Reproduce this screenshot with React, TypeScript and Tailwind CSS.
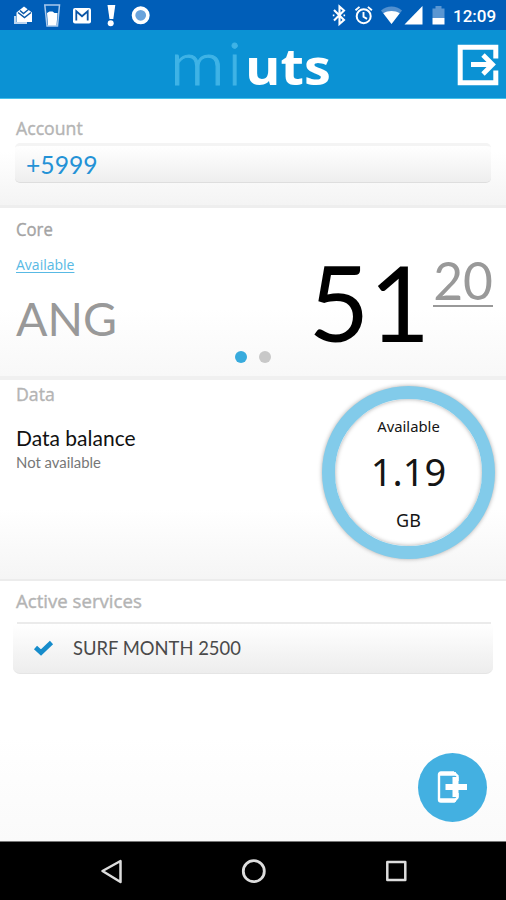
import type { ReactNode } from 'react'
import clsx from 'clsx'

function StatusBar() {
  return (
    <div className="h-[30px] bg-[#005eb8] flex items-center text-white">
      <svg className="w-[170px] h-[30px]" viewBox="0 0 170 30" fill="none">
        {/* inbox */}
        <path d="M14 16v8h13v-2H16v-6z" fill="#bcd5ef" />
        <path d="M16.500 12.500 24 6.500l8 6V22h-15.500z" fill="#fff" />
        <path d="m18 12.500 6.500 5 6.500-5M20 10.500l3.500 3L29 9" stroke="#0a58a8" strokeWidth="1.500" />
        {/* glass */}
        <path d="M44.800 5h14.700l-2 21H47z" stroke="#a9c9ec" strokeWidth="1.500" />
        <path d="M47 13l2.500-1.500h3l2 1.500h3L56.500 25.500h-8.500z" fill="#fff" />
        {/* mail */}
        <rect x="73" y="8" width="18" height="15.500" rx="2" fill="#fff" />
        <path d="M76.300 20.500V11.300l5.700 5 5.700-5v9.200" stroke="#0b55a6" strokeWidth="1.800" />
        {/* alert */}
        <path d="M107.500 5h7.800l-2 14h-3.800z" fill="#fff" />
        <circle cx="110.700" cy="23.300" r="3" fill="#fff" />
        {/* round app */}
        <circle cx="140.700" cy="15.300" r="7.200" fill="#69a3dc" stroke="#fff" strokeWidth="3.600" />
      </svg>
      <svg className="ml-auto w-[120px] h-[30px]" viewBox="330 0 120 30" fill="none">
        {/* bluetooth */}
        <path d="m334 10 10 10-4.500 4V6.500l4.500 4-10 10" stroke="#fff" strokeWidth="2.100" />
        <path d="M332.800 15.300h1.600M343.500 15.300h1.600" stroke="#fff" strokeWidth="1.800" />
        {/* alarm */}
        <circle cx="363.700" cy="16.200" r="7" stroke="#fff" strokeWidth="2" />
        <path d="M363.500 12v4.700l3.500 2.200M355.500 10.300l4-3.400M371.900 10.300l-4-3.400" stroke="#fff" strokeWidth="1.900" />
        {/* wifi */}
        <path d="M381 10.500c6-5.300 15-5.300 21 0L391.500 24z" fill="#5290cf" />
        <path d="M383.300 13.300c4.700-3 11.700-3 16.400 0L391.500 24z" fill="#fff" />
        {/* signal */}
        <path d="M404.500 24.500h18V6z" fill="#fff" />
        {/* battery */}
        <path d="M432.500 18V8.500h3V6h6v2.500h3V18z" fill="#5a96d2" />
        <path d="M432.500 18h12v6.500h-12z" fill="#fff" />
      </svg>
      <span className="w-[56px] pl-[3px] pt-[1px] font-[Roboto] font-medium text-[17px] leading-[30px]">12:09</span>
    </div>
  )
}

function Header() {
  return (
    <header className="h-[69px] bg-[#0b92d4] border-b border-[#45c1eb] flex justify-between">
      <h1 className="ml-[170px] pt-[9px] flex leading-[54px]">
        <span className="w-[58px] mt-[-4px] font-[Lato] font-light text-[60px] text-[#3fb3e6] [-webkit-text-stroke:1px_#3fb3e6]">
          <span className="block w-fit origin-left scale-x-[1.13]">m</span>
        </span>
        <span className="w-[17px] mt-[-4px] font-[Lato] font-light text-[60px] text-[#3fb3e6] [-webkit-text-stroke:1px_#3fb3e6]">i</span>
        <span className="origin-left scale-x-[1.08] font-['Open_Sans'] font-bold text-[50px] text-white">uts</span>
      </h1>
      <svg className="mt-[14px] mr-[7px] w-[42px] h-[42px]" viewBox="0 0 42 42" fill="none" stroke="#fff">
        <path d="M38.800 14.500V3.200H3.200v35.600h35.600V26.500" strokeWidth="5" />
        <path d="M14 20.500h22M26 11l9.500 9.500L26 30" strokeWidth="4.800" />
      </svg>
    </header>
  )
}

function SectionTitle({ children, className }: { children: ReactNode; className?: string }) {
  return (
    <h2 className={clsx("ml-4 w-fit origin-left font-['Open_Sans'] font-medium text-[19px] leading-[24px] whitespace-nowrap [-webkit-text-stroke:0.4px_currentColor]", className)}>
      {children}
    </h2>
  )
}

function Account() {
  return (
    <section className="h-[109px] pt-[17px] bg-linear-to-b from-white from-50% to-[#f4f4f4] border-b-3 border-[#eeeeee]">
      <SectionTitle className="scale-x-[0.93] text-[#b4b4b4]">Account</SectionTitle>
      <div className="mt-[3px] mx-[15px] h-[40px] rounded-[5px] border-t-3 border-t-[#f4f4f4] border-b border-b-[#dedede] bg-linear-to-b from-white to-[#eeeeee] pl-[11px]">
        <span className="block font-[Lato] text-[24.700px] leading-[38px] text-[#2492d6]">+5999</span>
      </div>
    </section>
  )
}

function Core() {
  return (
    <section className="h-[172px] pt-[9px] bg-linear-to-b from-white from-60% to-[#f8f8f8] border-b-4 border-[#f0f0f0]">
      <SectionTitle className="scale-x-[0.88] text-[#a4a4a4]">Core</SectionTitle>
      <div className="flex justify-between h-[104px]">
        <div className="ml-4 pt-[14px]">
          <a className="block w-fit origin-left font-['Open_Sans'] text-[14px] leading-[20px] text-[#58b9e4] underline underline-offset-2">Available</a>
          <div className="mt-[15px] font-[Lato] text-[46.500px] leading-[56px] text-[#999]">ANG</div>
        </div>
        <div className="flex mr-[13px] font-[Lato]">
          <span className="mr-[3px] text-[105px] leading-[120px] text-black">51</span>
          <span className="mt-[11px] h-[55px] border-b-2 border-[#999] text-[51.500px] leading-[56px] text-[#999]">20</span>
        </div>
      </div>
      <div className="mt-[6px] ml-[235px] flex gap-3">
        <i className="size-[12px] rounded-full bg-[#38abdd]" />
        <i className="size-[12px] rounded-full bg-[#c8c8c8]" />
      </div>
    </section>
  )
}

function DataBalance() {
  return (
    <section className="h-[201px] pt-[2px] flex justify-between bg-linear-to-b from-white from-65% to-[#f5f5f5] border-b-2 border-[#ececec]">
      <div>
        <SectionTitle className="scale-x-[0.93] text-[#b4b4b4]">Data</SectionTitle>
        <div className="ml-4 mt-[19px] font-[Lato] text-[21px] leading-[26px] text-[#111]">Data balance</div>
        <div className="ml-4 font-[Lato] text-[14.900px] leading-[22px] text-[#777]">Not available</div>
      </div>
      <div className="mt-[4px] mr-[11px] size-[173px] rounded-full border-[13px] border-[#82cbea] bg-white shadow-[0_0_4px_#aaa,inset_0_0_4px_#aaa] flex flex-col items-center font-['Noto_Sans'] text-[#151515]">
        <span className="mt-[16px] text-[14.800px] leading-[22px]">Available</span>
        <span className="mt-[11px] text-[38px] leading-[46px]">1.19</span>
        <span className="mt-[15px] text-[18px] leading-[22px]">GB</span>
      </div>
    </section>
  )
}

function ActiveServices() {
  return (
    <section className="h-[260px] pt-[8px] bg-linear-to-b from-white from-60% to-[#fafafa]">
      <SectionTitle className="scale-x-[0.98] text-[#b4b4b4]">Active services</SectionTitle>
      <div className="mt-[9px] ml-[17px] mr-[15px] h-[2px] bg-[#ebebeb]" />
      <div className="mx-[13px] h-[50px] rounded-b-[7px] border-b border-[#e5e5e5] bg-linear-to-b from-white to-[#ededed] flex items-center">
        <svg className="ml-[20px] w-[22px] h-[18px]" viewBox="0 0 22 18" fill="none">
          <path d="m2.500 7.500 5.500 5L18.500 2.500" stroke="#168ccb" strokeWidth="4.600" />
        </svg>
        <span className="ml-[18px] mt-[-2px] font-[Lato] text-[18.400px] leading-[24px] text-[#4a4a4a]">SURF MONTH 2500</span>
      </div>
      <button className="mt-[79px] ml-[418px] size-[69px] rounded-full bg-[#43b0e1] flex">
        <svg className="mt-[18px] ml-[19px] w-[32px] h-[32px]" viewBox="0 0 32 32" fill="none">
          <path d="M17 1.500H4A2 2 0 0 0 2 3.500v25a2 2 0 0 0 2 2h13l3.500-4V22M20.500 10V5L17 1.500" stroke="#fff" strokeWidth="2.400" />
          <path d="M2 3h17M2 29h17" stroke="#fff" strokeWidth="3.500" />
          <path d="M8.500 16h21.500M18.500 6v20" stroke="#fff" strokeWidth="6" />
        </svg>
      </button>
    </section>
  )
}

function NavBar() {
  return (
    <nav className="h-[59px] bg-black border-t border-[#777]">
      <svg className="w-full h-[58px]" viewBox="0 842 506 58" fill="none" stroke="#ddd" strokeWidth="2.500" strokeLinejoin="round">
        <path d="M102.500 871 120.500 861v21z" />
        <circle cx="253.800" cy="871.200" r="10.500" strokeWidth="2.800" />
        <rect x="387.300" y="862" width="18" height="18" />
      </svg>
    </nav>
  )
}

export default function App() {
  return (
    <div className="w-[506px] h-[900px] overflow-hidden bg-white">
      <StatusBar />
      <Header />
      <Account />
      <Core />
      <DataBalance />
      <ActiveServices />
      <NavBar />
    </div>
  )
}
